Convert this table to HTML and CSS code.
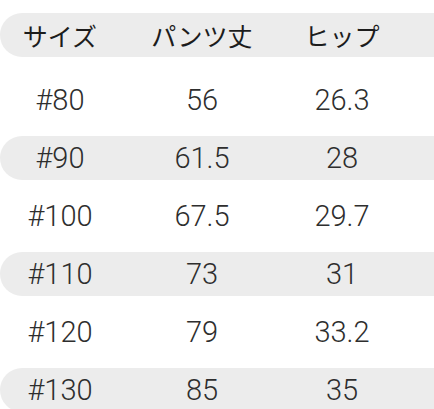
FILE: index.html
```html
<!DOCTYPE html>
<html lang="ja">
<head>
<meta charset="utf-8">
<link rel="stylesheet" href="styles.css">
</head>
<body>
<div class="table">
  <div class="row head shaded">
    <span>サイズ</span><span>パンツ丈</span><span>ヒップ</span>
  </div>
  <div class="row"><span>#80</span><span>56</span><span>26.3</span></div>
  <div class="row shaded"><span>#90</span><span>61.5</span><span>28</span></div>
  <div class="row"><span>#100</span><span>67.5</span><span>29.7</span></div>
  <div class="row shaded"><span>#110</span><span>73</span><span>31</span></div>
  <div class="row"><span>#120</span><span>79</span><span>33.2</span></div>
  <div class="row shaded"><span>#130</span><span>85</span><span>35</span></div>
</div>
</body>
</html>
```

FILE: styles.css
```css
html, body {
  margin: 0;
  padding: 0;
  background: #ffffff;
  overflow: hidden;
  width: 434px;
  height: 409px;
}

.table {
  display: flex;
  flex-direction: column;
  gap: 14px;
  padding-top: 13px;
  width: 434px;
}

.row {
  display: grid;
  grid-template-columns: 120px 164px 116px;
  align-items: center;
  height: 44px;
  font-family: Roboto, "Noto Sans", sans-serif;
  font-weight: 300;
  font-size: 29px;
  color: #2e2e2e;
  border-radius: 22px 0 0 22px;
}

.row span {
  text-align: center;
  white-space: nowrap;
}

.shaded {
  background: #ececec;
}

.head {
  font-family: "Noto Sans CJK JP", sans-serif;
  font-weight: 400;
  font-size: 25px;
  color: #1c1c1c;
  margin-bottom: 7px;
}
```
